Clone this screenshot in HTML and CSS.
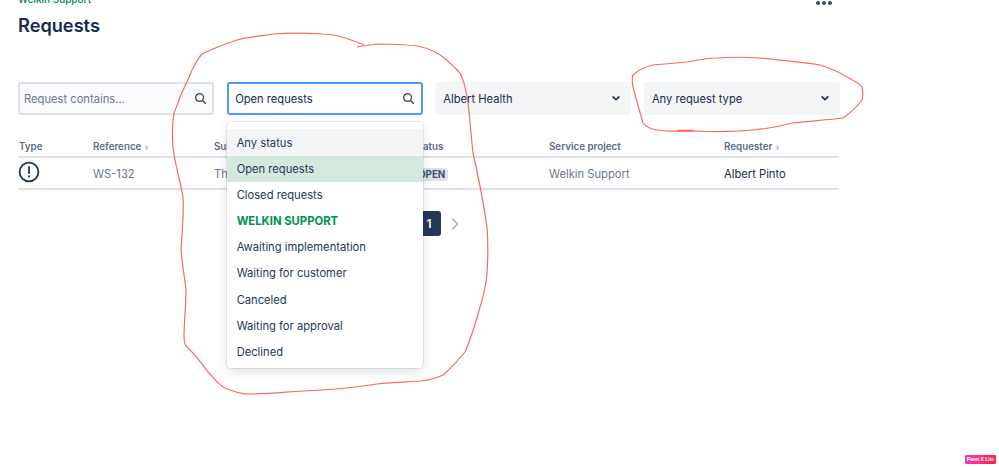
FILE: index.html
```html
<!DOCTYPE html>
<html lang="en">
<head>
<meta charset="utf-8">
<title>Requests</title>
<link rel="stylesheet" href="styles.css">
</head>
<body>
<main class="page">
  <header class="head">
    <div>
      <div class="crumb">Welkin Support</div>
      <h1 class="title">Requests</h1>
    </div>
    <div class="more"><i></i><i></i><i></i></div>
  </header>

  <section class="filters">
    <div class="field field-search">
      <span class="placeholder">Request contains...</span>
      <svg class="icon" viewBox="0 0 14 14"><circle cx="6" cy="6" r="4.2"/><path d="M9.2 9.2 12.4 12.4"/></svg>
    </div>
    <div class="field field-focus">
      <span>Open requests</span>
      <svg class="icon" viewBox="0 0 14 14"><circle cx="6" cy="6" r="4.2"/><path d="M9.2 9.2 12.4 12.4"/></svg>
      <ul class="menu">
        <li class="opt opt-hover">Any status</li>
        <li class="opt opt-selected">Open requests</li>
        <li class="opt">Closed requests</li>
        <li class="opt opt-group">WELKIN SUPPORT</li>
        <li class="opt">Awaiting implementation</li>
        <li class="opt">Waiting for customer</li>
        <li class="opt">Canceled</li>
        <li class="opt">Waiting for approval</li>
        <li class="opt">Declined</li>
      </ul>
    </div>
    <div class="field field-select">
      <span>Albert Health</span>
      <svg class="chev" viewBox="0 0 10 6"><path d="M1.5 1 5 4.5 8.5 1"/></svg>
    </div>
    <div class="field field-select">
      <span>Any request type</span>
      <svg class="chev" viewBox="0 0 10 6"><path d="M1.5 1 5 4.5 8.5 1"/></svg>
    </div>
  </section>

  <section class="table">
    <div class="row row-head">
      <div>Type</div>
      <div>Reference <span class="sort">⬍</span></div>
      <div>Subject</div>
      <div>Status</div>
      <div>Service project</div>
      <div>Requester <span class="sort">⬍</span></div>
    </div>
    <div class="row row-body">
      <div class="type-cell">
        <svg class="alert" viewBox="0 0 22 22"><circle cx="11" cy="11" r="9.4"/><path d="M11 6v6.2"/><path d="M11 15.2v.6"/></svg>
      </div>
      <div>WS-132</div>
      <div>The request</div>
      <div><span class="tag">OPEN</span></div>
      <div>Welkin Support</div>
      <div class="person">Albert Pinto</div>
    </div>
  </section>

  <nav class="pager">
    <span class="page-num">1</span>
    <svg class="page-next" viewBox="0 0 8 12"><path d="M1.5 1 6.5 6 1.5 11"/></svg>
  </nav>
</main>

<svg class="scribble" viewBox="0 0 999 467">
  <path d="M364 45C350 39 335 34 323 34C305 33 285 33 273 34C260 36 248 37 237 40C225 44 212 49 202 54C198 58 195 64 192 70C188 80 184 88 180 97C178 104 176 108 174 113C172 125 172 135 173 147C175 165 180 180 183 197C184 215 182 232 181 250C182 265 185 278 186 290C186 305 184 322 184 337C184 342 185 345 187 347C195 354 202 364 208 372C214 378 219 385 225 388C232 391 240 394 248 394C268 394 285 392 303 391C328 390 352 388 377 384C392 382 406 382 420 381C430 380 437 378 443 375C450 369 458 361 465 352C471 338 476 322 480 307C484 295 486 285 487 273C488 258 488 240 487 227C483 200 478 175 473 153C471 136 470 118 468 103C466 90 464 80 460 73C453 66 446 58 437 53C431 50 424 47 417 46C404 44 390 44 377 44C370 45 362 46 357 47"/>
  <path d="M633 75C638 70 645 67 653 65C664 64 676 63 687 62C697 60 707 58 717 58C732 57 746 57 760 58C780 60 800 62 820 65C830 68 839 72 847 77C853 80 859 83 862 87C863 92 863 96 862 100C857 107 850 113 843 118C827 120 810 121 793 123C780 126 767 129 753 130C733 132 713 132 693 131C681 131 668 132 657 130C651 129 646 127 643 123C640 112 636 99 633 87C632 83 632 79 633 75Z"/>
  <path d="M677 130.500H693" class="scribble-thick"/>
</svg>

<div class="badge">Paint X Lite</div>
</body>
</html>
```

FILE: styles.css
```css
* { box-sizing: border-box; }

html, body {
  margin: 0;
  height: 467px;
  overflow: hidden;
  background: #fff;
  font-family: Inter, "Liberation Sans", sans-serif;
  color: #172b4d;
}

.page {
  width: 822px;
  margin-top: -7px;
  margin-left: 18px;
}

.head {
  display: flex;
  justify-content: space-between;
  height: 89px;
}

.crumb {
  font-size: 10px;
  line-height: 12px;
  font-weight: 500;
  color: #00875a;
}

.title {
  margin: 8px 0 0;
  font-size: 18.200px;
  line-height: 24px;
  font-weight: 600;
  color: #172b4d;
}

.more {
  display: flex;
  gap: 2px;
  margin: 8px 8px 0 0;
}

.more i {
  width: 4px;
  height: 4px;
  border-radius: 50%;
  background: #344563;
}

.filters {
  display: grid;
  grid-template-columns: repeat(4, 1fr);
  gap: 12.500px;
}

.field {
  position: relative;
  height: 33px;
  display: flex;
  align-items: center;
  justify-content: space-between;
  border-radius: 3px;
  font-size: 11.200px;
  padding: 0 8px;
}

.field-search {
  background: #fafbfc;
  border: 2px solid #dfe1e6;
  padding: 0 5px 0 4px;
}

.placeholder { color: #6b778c; }

.field-focus {
  background: #fff;
  border: 2px solid #4c9aff;
  padding: 0 6px 0 6.500px;
}

.field-select {
  background: #f4f5f7;
  padding: 0 11px 0 8px;
}

.icon {
  width: 13px;
  height: 13px;
  fill: none;
  stroke: #344563;
  stroke-width: 1.4;
  stroke-linecap: round;
}

.chev {
  width: 8px;
  height: 5px;
  fill: none;
  stroke: #172b4d;
  stroke-width: 2;
  stroke-linecap: round;
  stroke-linejoin: round;
}

.menu {
  position: absolute;
  z-index: 2;
  top: 38px;
  left: -2px;
  width: 196px;
  height: 246px;
  margin: 0;
  padding: 8px 0 0;
  list-style: none;
  background: #fff;
  border-radius: 4px;
  box-shadow: 0 0 0 1px rgba(9, 30, 66, 0.08), 0 4px 11px rgba(9, 30, 66, 0.13);
}

.opt {
  height: 26.100px;
  line-height: 26.100px;
  padding-left: 10px;
  font-size: 11.200px;
  color: #253858;
}

.opt-hover { background: #f4f5f7; margin-top: -1px; padding-top: 1px; height: 27.100px; }
.opt-selected { background: #d5e8dd; }

.opt-group {
  font-weight: 700;
  color: #00924f;
  font-size: 11.300px;
}

.table {
  margin-top: 22px;
  width: 821px;
}

.row {
  display: grid;
  grid-template-columns: 74px 121px 199px 136px 175px 1fr;
  align-items: center;
  padding-left: 1px;
}

.row-head {
  height: 21px;
  padding-bottom: 1px;
  border-bottom: 2px solid #dfe1e6;
  font-size: 9.800px;
  font-weight: 600;
  color: #5e6c84;
}

.row-body {
  height: 32px;
  padding-top: 2px;
  border-bottom: 2px solid #dfe1e6;
  font-size: 11.200px;
  color: #6b778c;
}

.sort {
  font-size: 6px;
  color: #c1c7d0;
}

.type-cell { display: flex; }

.alert {
  width: 22px;
  height: 22px;
  margin-left: -1px;
  margin-top: -5px;
  fill: none;
  stroke: #1d3557;
  stroke-width: 1.8;
  stroke-linecap: round;
}

.tag {
  display: inline-block;
  margin-left: 2px;
  padding: 0 3px;
  border-radius: 3px;
  background: #dfe1e6;
  color: #42526e;
  font-size: 9.800px;
  line-height: 13px;
  font-weight: 700;
}

.person { color: #172b4d; }

.pager {
  display: flex;
  align-items: center;
  gap: 10px;
  margin: 21px 0 0 399px;
}

.page-num {
  width: 24px;
  height: 25px;
  line-height: 25px;
  text-align: center;
  border-radius: 3px;
  background: #253858;
  color: #fff;
  font-size: 12px;
  font-weight: 600;
}

.page-next {
  width: 8px;
  height: 12px;
  fill: none;
  stroke: #a5adba;
  stroke-width: 1.6;
  stroke-linecap: round;
  stroke-linejoin: round;
}

.scribble {
  position: absolute;
  z-index: 3;
  top: 0;
  left: 0;
  width: 999px;
  height: 467px;
  fill: none;
  stroke: #fa6a5c;
  stroke-width: 1.200;
  pointer-events: none;
}

.scribble-thick { stroke-width: 1.600; }

.badge {
  position: absolute;
  top: 455px;
  left: 965px;
  width: 31px;
  height: 9px;
  line-height: 9px;
  text-align: center;
  border-radius: 1px;
  background: linear-gradient(90deg, #f53bae, #fb2450);
  color: #fff;
  font-family: "Liberation Sans", sans-serif;
  font-size: 5px;
  font-weight: 700;
  white-space: nowrap;
}
```
